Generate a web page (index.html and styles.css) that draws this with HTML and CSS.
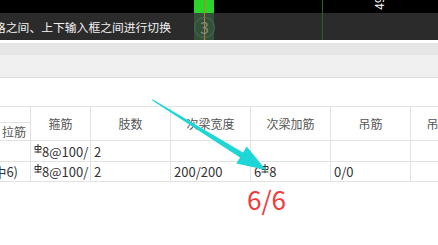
FILE: index.html
```html
<!DOCTYPE html>
<html lang="zh-CN">
<head>
    <meta charset="UTF-8">
    <title>梁钢筋表格</title>
    <link rel="stylesheet" href="styles.css">
</head>
<body>
    <div class="banner">
        <div class="topbar"></div>
        <div class="hintbar">
            <span class="hint">格之间、上下输入框之间进行切换</span>
        </div>
        <!-- canvas markers behind the hint bar -->
        <div class="marker">
            <div class="marker-badge">3</div>
        </div>
        <div class="axis-line"></div>
        <div class="axis-label">49</div>
    </div>

    <div class="toolbar-top"></div>
    <div class="toolbar"></div>

    <div class="grid-wrap">
        <table class="grid">
            <colgroup>
                <col class="c0"><col class="c1"><col class="c2"><col class="c3">
                <col class="c4"><col class="c5"><col class="c6">
            </colgroup>
            <thead>
                <tr class="h1">
                    <th></th>
                    <th rowspan="2">箍筋</th>
                    <th rowspan="2">肢数</th>
                    <th rowspan="2">次梁宽度</th>
                    <th rowspan="2">次梁加筋</th>
                    <th rowspan="2">吊筋</th>
                    <th rowspan="2">吊筋锚固</th>
                </tr>
                <tr class="h2">
                    <th>拉筋</th>
                </tr>
            </thead>
            <tbody>
                <tr class="r1">
                    <td></td>
                    <td><svg class="bar" viewBox="0 0 8 9"><path d="M1 2.5h6v3h-6z M4 0v9 M0.5 8h7"/></svg>8@100/</td>
                    <td>2</td>
                    <td></td>
                    <td></td>
                    <td></td>
                    <td></td>
                </tr>
                <tr class="r2">
                    <td><div class="clip">中6)</div></td>
                    <td><svg class="bar" viewBox="0 0 8 9"><path d="M1 2.5h6v3h-6z M4 0v9 M0.5 8h7"/></svg>8@100/</td>
                    <td>2</td>
                    <td>200/200</td>
                    <td>6<svg class="bar" viewBox="0 0 8 9"><path d="M1 2.5h6v3h-6z M4 0v9 M0.5 8h7"/></svg>8</td>
                    <td>0/0</td>
                    <td></td>
                </tr>
            </tbody>
        </table>
    </div>

    <div class="count">6/6</div>

    <!-- pointer arrow drawn over the table -->
    <svg class="pointer" viewBox="0 0 438 245">
        <polygon points="152,99 243,152.5 246.7,146.5 266,170 236.3,163.5 240,157.6 153,101"/>
    </svg>
</body>
</html>
```

FILE: styles.css
```css
body {
    margin: 0;
    width: 438px;
    height: 245px;
    overflow: hidden;
    position: relative;
    background-color: #fff;
    font-family: "Noto Sans CJK SC", "Noto Sans", sans-serif;
}

.banner {
    position: relative;
}

.topbar {
    height: 13px;
    background-color: #000;
}

.hintbar {
    height: 27px;
    background-color: #2b2b2b;
    display: flex;
    align-items: center;
    overflow: hidden;
}

.hint {
    margin-left: -6px;
    color: #f2f2f2;
    font-size: 11.8px;
    white-space: nowrap;
}

.marker {
    position: absolute;
    left: 194px;
    top: 0;
    width: 20px;
    height: 40px;
    background: linear-gradient(#2bd42b 0, #2bd42b 13px, #33503a 13px);
}

.marker::before {
    content: "";
    position: absolute;
    left: 10px;
    top: 0;
    width: 1px;
    height: 40px;
    background-color: #c47a22;
}

.marker-badge {
    position: absolute;
    left: 0;
    top: 17px;
    width: 19px;
    height: 19px;
    border: 1px solid #4f6a55;
    border-radius: 50%;
    color: #7a8c7e;
    font-size: 16px;
    line-height: 19px;
    text-align: center;
}

.axis-line {
    position: absolute;
    left: 322px;
    top: 0;
    width: 1px;
    height: 40px;
    background-color: #1d6a1d;
}

.axis-label {
    position: absolute;
    left: 372px;
    top: -3px;
    color: #fff;
    font-size: 12px;
    line-height: 12px;
    transform: rotate(-90deg);
    transform-origin: center;
}

.toolbar-top {
    height: 12px;
    margin-top: 3px;
    background-color: #e6e6e6;
}

.toolbar {
    height: 22px;
    background-color: #f0f0f0;
    border-bottom: 1px solid #dcdcdc;
}

.grid-wrap {
    padding-top: 28px;
    overflow: hidden;
}

.grid {
    margin-left: -3px;
    border-collapse: collapse;
    table-layout: fixed;
    width: 493px;
    font-size: 12px;
}

.c0 { width: 33px; }
.c1 { width: 60px; }
.c2, .c3, .c4, .c5 { width: 80px; }
.c6 { width: 80px; }

.grid th,
.grid td {
    border: 1px solid #e2e2e2;
    padding: 0 3px;
    white-space: nowrap;
    overflow: hidden;
}

.grid th {
    font-weight: normal;
    color: #555;
    text-align: center;
}

.grid td {
    color: #333;
    font-size: 13px;
    text-align: left;
}

.grid .h1 { height: 16px; }
.grid .h2 { height: 16px; }
.grid .r1 { height: 21px; }
.grid .r2 { height: 20px; }

.bar {
    width: 8px;
    height: 9px;
    vertical-align: 4px;
    fill: none;
    stroke: #333;
    stroke-width: 1;
}

.clip {
    display: flex;
    justify-content: flex-end;
    margin-right: 9px;
}

.count {
    padding: 2px 0 0 247px;
    color: #f03b3b;
    font-size: 26px;
    line-height: 30px;
}

.pointer {
    position: absolute;
    left: 0;
    top: 0;
    width: 438px;
    height: 245px;
    pointer-events: none;
}

.pointer polygon {
    fill: #1ed6d6;
}
```
